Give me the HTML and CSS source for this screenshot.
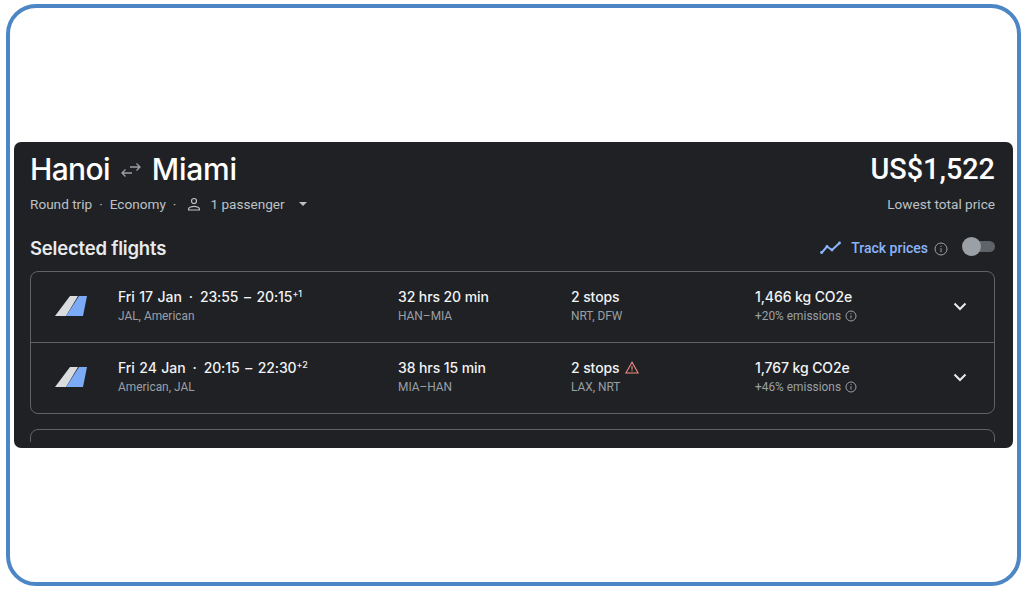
FILE: index.html
```html
<!DOCTYPE html>
<html lang="en">
<head>
<meta charset="utf-8">
<title>Hanoi to Miami flights</title>
<link rel="stylesheet" href="styles.css">
</head>
<body>
<div class="frame">
  <section class="panel">
    <header class="head">
      <div class="head-left">
        <h1 class="route"><span>Hanoi</span>
          <svg class="swap" width="20" height="16" viewBox="0 0 20 16" fill="none" stroke="#9aa0a6" stroke-width="1.300"><path d="M9 5H19M15.500 1.500L19 5l-3.500 3.500"/><path d="M11 11H1M4.500 7.500L1 11l3.500 3.500"/></svg>
          <span class="dest">Miami</span></h1>
        <div class="meta">
          <span>Round trip</span><span class="dot">·</span><span>Economy</span><span class="dot">·</span>
          <svg class="person" width="16" height="16" viewBox="0 0 16 16" fill="none" stroke="#bdc1c6" stroke-width="1.200"><circle cx="8" cy="5" r="2.500"/><path d="M2.600 14v-1.200c0-1.600 3.400-2.500 5.400-2.500s5.400.9 5.400 2.500V14z"/></svg>
          <span>1 passenger</span>
          <span class="caret"></span>
        </div>
      </div>
      <div class="head-right">
        <div class="price">US$1,522</div>
        <div class="price-note">Lowest total price</div>
      </div>
    </header>
    <div class="bar">
      <h2 class="selected">Selected flights</h2>
      <div class="track">
        <svg class="trend" width="22" height="14" viewBox="0 0 22 14" fill="none" stroke="#8ab4f8" stroke-width="2"><path d="M1.500 12L7 5.500 12 9l7.500-7"/><circle cx="1.500" cy="11.500" r="1.400" fill="#8ab4f8" stroke="none"/><circle cx="7" cy="5.500" r="1.400" fill="#8ab4f8" stroke="none"/><circle cx="12" cy="9" r="1.400" fill="#8ab4f8" stroke="none"/><circle cx="19.500" cy="2" r="1.400" fill="#8ab4f8" stroke="none"/></svg>
        <span class="track-label">Track prices</span>
        <svg class="info-lg" width="14" height="14" viewBox="0 0 14 14" fill="none" stroke="#9aa0a6" stroke-width="1"><circle cx="7" cy="7" r="6"/><path d="M7 6.200v4M7 3.800v1.200"/></svg>
        <span class="switch"><span class="knob"></span></span>
      </div>
    </div>
    <div class="scroll">
      <div class="card">
        <div class="row">
          <svg class="tail" width="32" height="20" viewBox="0 0 32 20"><path d="M0 20L15 0h8L11 20z" fill="#dadce0"/><path d="M11 20L24 0h8l-4 20z" fill="#7baaf7"/></svg>
          <div class="cell"><div class="main"><span class="date">Fri 17 Jan</span><span class="sep">·</span><span class="time">23:55 – 20:15</span><sup>+1</sup></div><div class="sub">JAL, American</div></div>
          <div class="cell"><div class="main">32 hrs 20 min</div><div class="sub">HAN–MIA</div></div>
          <div class="cell"><div class="main">2 stops</div><div class="sub">NRT, DFW</div></div>
          <div class="cell"><div class="main">1,466 kg CO2e</div><div class="sub"><span>+20% emissions</span>
            <svg class="info" width="12" height="12" viewBox="0 0 12 12" fill="none" stroke="#9aa0a6" stroke-width="1"><circle cx="6" cy="6" r="5"/><path d="M6 5.300v3.200M6 3.200v1"/></svg></div></div>
          <svg class="chev" width="14" height="9" viewBox="0 0 14 9" fill="none" stroke="#e8eaed" stroke-width="2"><path d="M1.500 1.500L7 7l5.500-5.500"/></svg>
        </div>
        <div class="row row-next">
          <svg class="tail" width="32" height="20" viewBox="0 0 32 20"><path d="M0 20L15 0h8L11 20z" fill="#dadce0"/><path d="M11 20L24 0h8l-4 20z" fill="#7baaf7"/></svg>
          <div class="cell"><div class="main"><span class="date">Fri 24 Jan</span><span class="sep">·</span><span class="time">20:15 – 22:30</span><sup>+2</sup></div><div class="sub">American, JAL</div></div>
          <div class="cell"><div class="main">38 hrs 15 min</div><div class="sub">MIA–HAN</div></div>
          <div class="cell"><div class="main"><span>2 stops</span>
            <svg class="warn" width="14" height="13" viewBox="0 0 14 13" fill="none" stroke="#f28b82" stroke-width="1.100"><path d="M7 1.200L.9 12h12.200zM7 5v3.800M7 9.600v1"/></svg></div><div class="sub">LAX, NRT</div></div>
          <div class="cell"><div class="main">1,767 kg CO2e</div><div class="sub"><span>+46% emissions</span>
            <svg class="info" width="12" height="12" viewBox="0 0 12 12" fill="none" stroke="#9aa0a6" stroke-width="1"><circle cx="6" cy="6" r="5"/><path d="M6 5.300v3.200M6 3.200v1"/></svg></div></div>
          <svg class="chev" width="14" height="9" viewBox="0 0 14 9" fill="none" stroke="#e8eaed" stroke-width="2"><path d="M1.500 1.500L7 7l5.500-5.500"/></svg>
        </div>
      </div>
      <div class="card card-next"></div>
    </div>
  </section>
</div>
</body>
</html>
```
FILE: styles.css
```css
* { box-sizing: border-box; }
html, body { margin: 0; height: 100%; background: #fff; overflow: hidden; }
body { padding: 4px 5px 3px 6px; font-family: Roboto, "Liberation Sans", sans-serif; }
.frame {
  height: 582px;
  border: 4px solid #4d86c4;
  border-radius: 30px;
  padding: 134px 4px 0 4px;
  background: #fff;
}
.panel {
  height: 306px;
  background: #202124;
  border-radius: 7px;
  padding: 0 18px 6px 16px;
  color: #e8eaed;
  display: flex;
  flex-direction: column;
}
.head { display: flex; justify-content: space-between; align-items: flex-start; padding-top: 9px; }
.route {
  margin: 0;
  font: 500 30px/36px Inter, Roboto, sans-serif;
  letter-spacing: -0.65px;
  color: #fff;
  display: flex;
  align-items: center;
  gap: 11px;
}
.dest { letter-spacing: -0.25px; }
.swap { margin-top: 2px; }
.meta {
  margin-top: 7px;
  display: flex;
  align-items: center;
  font-size: 13.600px;
  line-height: 20px;
  color: #bdc1c6;
}
.dot { margin: 0 7px; }
.person { margin: 0 8px 0 3px; }
.caret {
  margin-left: 14px;
  width: 0;
  height: 0;
  border: 4px solid transparent;
  border-top-color: #bdc1c6;
  border-bottom: 0;
}
.head-right { text-align: right; }
.price { font: 500 28.800px/36px Roboto, sans-serif; color: #fff; }
.price-note { margin-top: 7px; font-size: 13.600px; line-height: 20px; color: #bdc1c6; }
.bar { display: flex; justify-content: space-between; align-items: center; margin-top: 19px; height: 30px; }
.selected { margin: 0; font: 600 18.500px/24px Inter, Roboto, sans-serif; letter-spacing: -0.2px; color: #e8eaed; }
.track { display: flex; align-items: center; }
.trend { margin-right: 9px; }
.track-label { font: 500 14px/20px Roboto, sans-serif; color: #8ab4f8; }
.info-lg { margin: 1px 0 0 6px; }
.switch {
  position: relative;
  width: 29px;
  height: 11px;
  margin: -3px 0 0 18px;
  border-radius: 6px;
  background: #5f6368;
  display: block;
}
.knob {
  position: absolute;
  left: -4px;
  top: -4px;
  width: 19px;
  height: 19px;
  border-radius: 50%;
  background: #9aa0a6;
}
.scroll { flex: 1; min-height: 0; overflow: hidden; margin-top: 8px; }
.card { border: 1px solid #5f6368; border-radius: 8px; }
.card-next { margin-top: 15px; height: 40px; }
.row {
  display: grid;
  grid-template-columns: 87px 280px 173px 184px 1fr auto;
  align-items: center;
  height: 70px;
}
.row-next { height: 71px; border-top: 1px solid #5f6368; }
.tail { margin: 0 0 2px 24px; }
.cell { display: flex; flex-direction: column; padding-bottom: 2px; }
.main {
  font: 500 14px/20px Inter, Roboto, sans-serif;
  letter-spacing: -0.1px;
  color: #f1f3f4;
  display: flex;
  align-items: center;
  gap: 5px;
}
.date { word-spacing: 1px; }
.sep { margin: 0 2px; }
.time { word-spacing: 2px; }
sup { font-size: 9px; line-height: 9px; align-self: flex-start; margin: 2px 0 0 -5px; }
.warn { margin-left: 1px; }
.sub {
  font-size: 11.900px;
  line-height: 19px;
  color: #9aa0a6;
  display: flex;
  align-items: center;
  gap: 4px;
}
.chev { margin: 0 27px 2px 0; }
```
